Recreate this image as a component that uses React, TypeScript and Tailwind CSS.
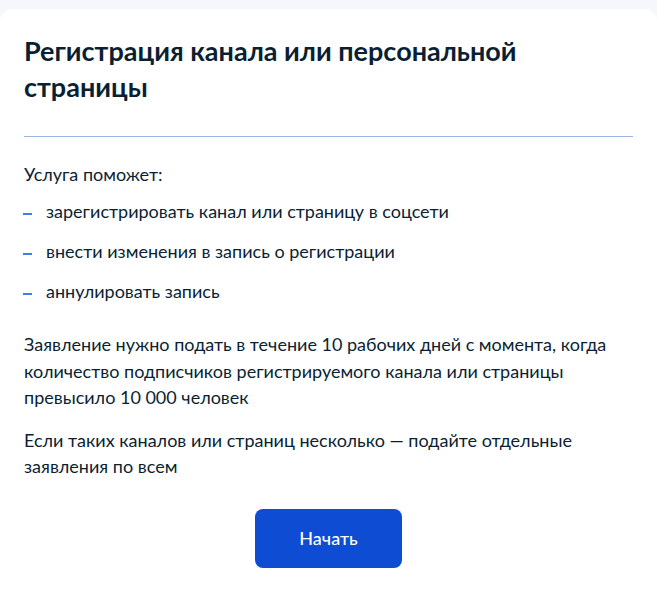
const items = [
  'зарегистрировать канал или страницу в соцсети',
  'внести изменения в запись о регистрации',
  'аннулировать запись',
];

export default function App() {
  return (
    <div
      className="min-h-screen bg-[#f5f7fd] pt-[9px] text-[#0b1f33]"
      style={{ fontFamily: 'Lato, "Noto Sans", sans-serif' }}
    >
      <div className="rounded-t-[12px] bg-white px-6 pt-6 pb-12">
        {/* Title */}
        <h1 className="text-[27px] font-bold leading-[36px]">
          Регистрация канала или персональной
          <br />
          страницы
        </h1>

        <div className="mt-[31px] h-px bg-[#9db1e0]" />

        {/* Body */}
        <p className="mt-[25px] text-[18px] leading-[24px]">Услуга поможет:</p>
        <ul className="mt-[13px] flex flex-col gap-4">
          {items.map((item) => (
            <li key={item} className="flex items-center text-[18px] leading-[24px]">
              <span className="mr-[14px] ml-[-1px] h-[2px] w-[9px] translate-y-[3px] bg-[#3f7ef0]" />
              {item}
            </li>
          ))}
        </ul>

        <p className="mt-[28px] text-[18px] leading-[26.5px]">
          Заявление нужно подать в течение 10 рабочих дней с момента, когда
          количество подписчиков регистрируемого канала или страницы превысило
          10 000 человек
        </p>
        <p className="mt-4 text-[18px] leading-[26.5px]">
          Если таких каналов или страниц несколько — подайте отдельные
          заявления по всем
        </p>

        <div className="mt-[29px] flex justify-center">
          <button className="h-[59px] w-[147px] rounded-[8px] bg-[#0d4cd3] text-[18px] font-medium text-white">
            Начать
          </button>
        </div>
      </div>
    </div>
  );
}
